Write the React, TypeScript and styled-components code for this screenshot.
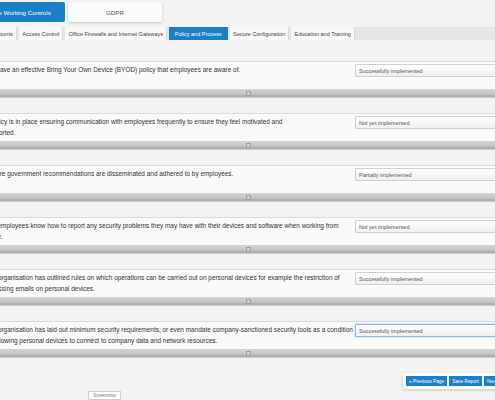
import React from 'react'
import styled, { createGlobalStyle } from 'styled-components'

const GlobalStyle = createGlobalStyle`
    html, body {
        margin: 0;
        padding: 0;
        background: #f3f3f3;
        overflow: hidden;
    }
    body {
        font-family: "Liberation Sans", Arial, sans-serif;
    }
`

const Page = styled.div`
    margin-left: -40px;
    width: 700px;
    padding-top: 2px;
`

const MainTabs = styled.div`
    display: flex;
    gap: 3px;
    padding-left: 11px;
`

const MainTab = styled.div<{ $active?: boolean }>`
    width: 94px;
    height: 20px;
    display: flex;
    align-items: center;
    justify-content: center;
    font-size: 6.2px;
    border-radius: 2px;
    background: ${ ({ $active }) => $active ? '#1b7fc6' : '#fbfbfb' };
    color: ${ ({ $active }) => $active ? '#ffffff' : '#555555' };
    box-shadow: ${ ({ $active }) => $active ? 'none' : '0 1px 3px rgba(0, 0, 0, 0.18)' };
`

const SubTabs = styled.div`
    display: flex;
    gap: 2px;
    height: 13px;
    margin-top: 5px;
    padding-left: 14px;
    background: #e6e6e6;
`

const SubTab = styled.div<{ $active?: boolean }>`
    display: flex;
    align-items: center;
    padding: ${ ({ $active }) => $active ? '0 5.5px' : '0 3.25px' };
    font-size: 5.5px;
    white-space: nowrap;
    background: ${ ({ $active }) => $active ? '#1b7fc6' : '#f8f8f8' };
    color: ${ ({ $active }) => $active ? '#ffffff' : '#444444' };
    border-right: 1px solid ${ ({ $active }) => $active ? '#1b7fc6' : '#dadada' };
`

const Questions = styled.div`
    margin-top: 21px;
`

const Block = styled.div`
    margin-bottom: 15px;
`

const Panel = styled.div`
    display: flex;
    align-items: flex-start;
    min-height: 22px;
    padding: 2px 0 3px 25px;
    background: #fafafa;
    border-top: 1px solid #dcdcdc;
`

const Question = styled.div`
    width: 368px;
    font-size: 6.45px;
    line-height: 11px;
    color: #333333;
    white-space: pre-line;
`

const Select = styled.div<{ $focused?: boolean }>`
    width: 180px;
    height: 13px;
    margin-left: 2px;
    box-sizing: border-box;
    display: flex;
    align-items: center;
    padding-left: 3px;
    font-size: 5.5px;
    color: #555555;
    border-radius: 1px;
    background: linear-gradient(#ffffff, #f0f0f0);
    border: 1px solid ${ ({ $focused }) => $focused ? '#8fb8e6' : '#cfcfcf' };
    box-shadow: ${ ({ $focused }) => $focused ? '0 0 2px rgba(80, 150, 230, 0.5)' : 'none' };
`

const Bar = styled.div`
    display: flex;
    align-items: flex-start;
    height: 9px;
    padding-left: 286px;
    background: linear-gradient(#d3d3d3 0%, #c6c6c6 55%, #a8a8a8 80%, #d9d9d9 100%);
`

const Handle = styled.div`
    width: 3px;
    height: 3px;
    margin-top: 2px;
    border: 1px solid #9e9e9e;
    background: #cfcfcf;
`

const Footer = styled.div`
    display: flex;
    margin-top: 5px;
    padding-left: 443px;
`

const ButtonGroup = styled.div`
    display: flex;
    gap: 2px;
    padding: 3px;
    background: #ffffff;
    box-shadow: 0 1px 3px rgba(0, 0, 0, 0.2);
`

const Button = styled.div`
    display: flex;
    align-items: center;
    height: 10px;
    padding: 0 3px;
    font-size: 4.8px;
    color: #ffffff;
    background: #1e7fc9;
    white-space: nowrap;
`

const Extra = styled.div`
    display: flex;
    margin-top: 2px;
    padding-left: 128px;
`

const SmallTab = styled.div`
    padding: 1px 4px;
    font-size: 4.5px;
    color: #777777;
    background: #ffffff;
    border: 1px solid #d0d0d0;
`

const tabs = [
    'User Accounts',
    'Access Control',
    'Office Firewalls and Internet Gateways',
    'Policy and Process',
    'Secure Configuration',
    'Education and Training',
]

const questions = [
    { text: 'We have an effective Bring Your Own Device (BYOD) policy that employees are aware of.', answer: 'Successfully implemented' },
    { text: 'A policy is in place ensuring communication with employees frequently to ensure they feel motivated and\nsupported.', answer: 'Not yet implemented' },
    { text: 'Ensure government recommendations are disseminated and adhered to by employees.', answer: 'Partially implemented' },
    { text: 'Our employees know how to report any security problems they may have with their devices and software when working from home.', answer: 'Not yet implemented' },
    { text: 'The organisation has outlined rules on which operations can be carried out on personal devices for example the restriction of accessing emails on personal devices.', answer: 'Successfully implemented' },
    { text: 'The organisation has laid out minimum security requirements, or even mandate company-sanctioned security tools as a condition for allowing personal devices to connect to company data and network resources.', answer: 'Successfully implemented', focused: true },
]

export default function App() {
    return (
        <>
            <GlobalStyle />
            <Page>
                <MainTabs>
                    <MainTab $active>Home Working Controls</MainTab>
                    <MainTab>GDPR</MainTab>
                </MainTabs>
                <SubTabs>
                    { tabs.map(tab => (
                        <SubTab key={ tab } $active={ tab === 'Policy and Process' }>{ tab }</SubTab>
                    )) }
                </SubTabs>
                <Questions>
                    { questions.map(q => (
                        <Block key={ q.text }>
                            <Panel>
                                <Question>{ q.text }</Question>
                                <Select $focused={ q.focused }>{ q.answer }</Select>
                            </Panel>
                            <Bar>
                                <Handle />
                            </Bar>
                        </Block>
                    )) }
                </Questions>
                <Footer>
                    <ButtonGroup>
                        <Button>« Previous Page</Button>
                        <Button>Save Report</Button>
                        <Button>Next Page »</Button>
                    </ButtonGroup>
                </Footer>
                <Extra>
                    <SmallTab>Screenshot</SmallTab>
                </Extra>
            </Page>
        </>
    )
}
